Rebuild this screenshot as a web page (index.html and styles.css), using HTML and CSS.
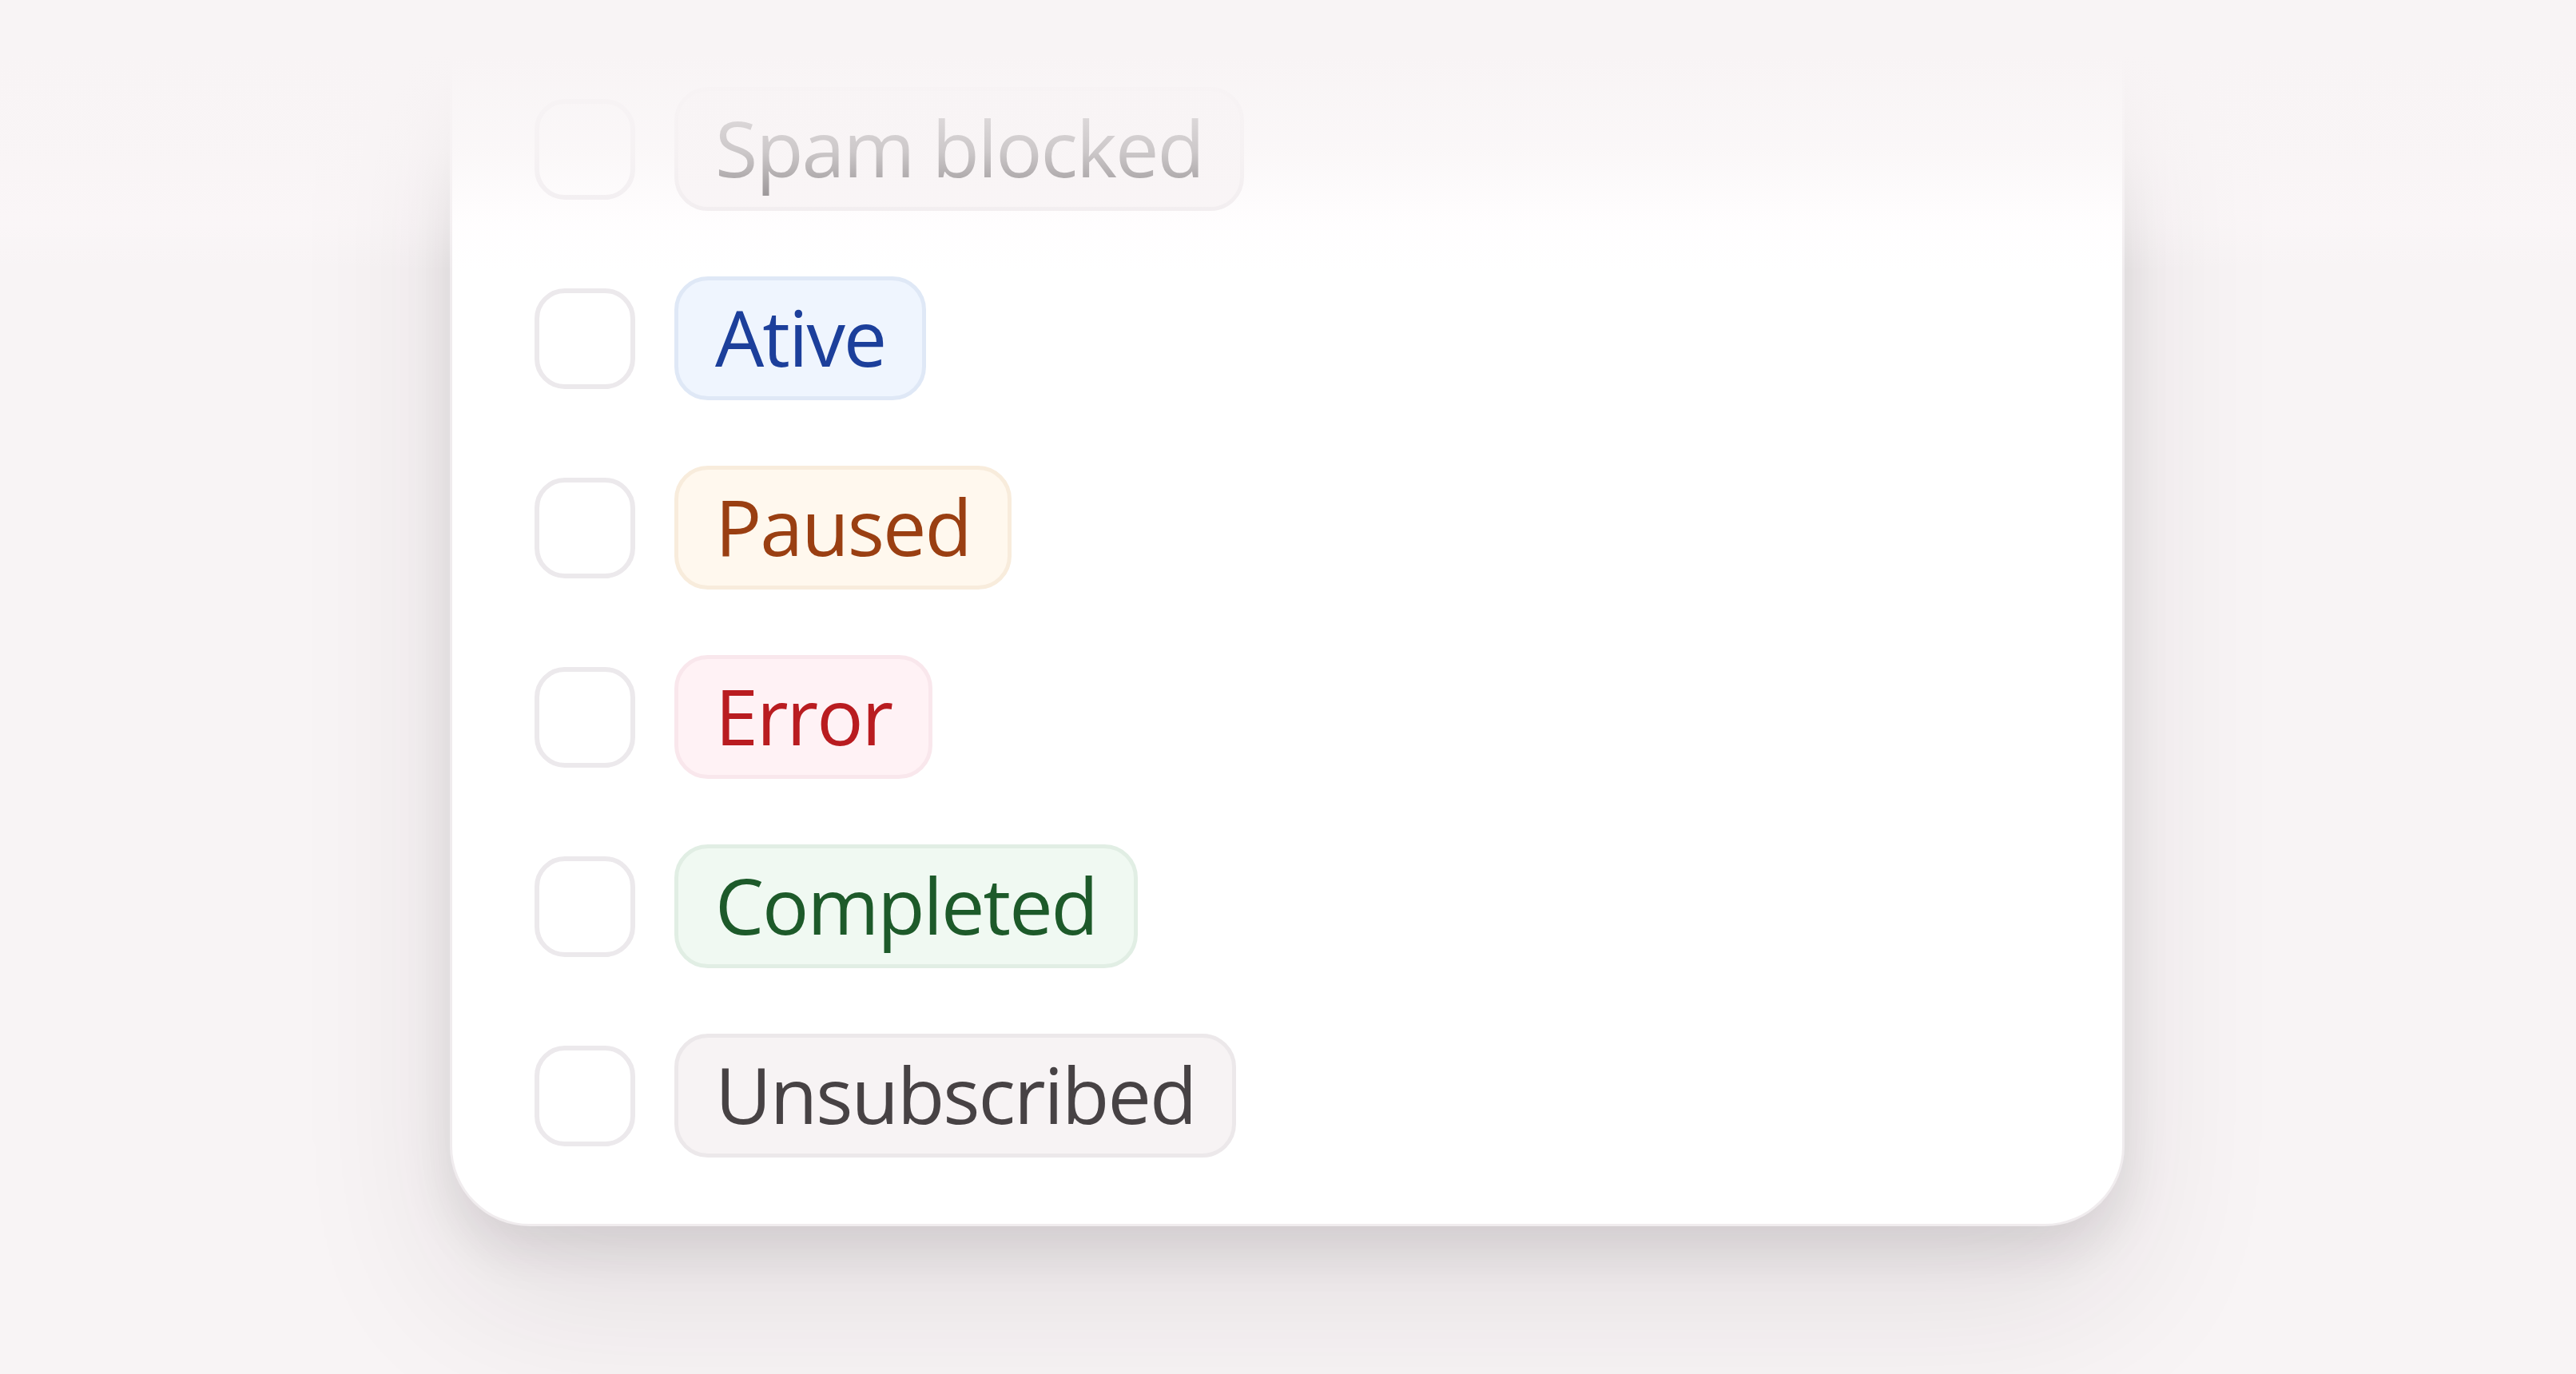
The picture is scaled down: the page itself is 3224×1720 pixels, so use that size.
FILE: index.html
```html
<html>

<head>
  <title>Status filter</title>
  <link rel="stylesheet" href="styles.css">
</head>

<body>

  <main>
    <div class="fade"></div>
    <ul class="card">
      <li class="row">
        <span class="check"></span>
        <span class="badge gray">Spam blocked</span>
      </li>
      <li class="row">
        <span class="check"></span>
        <span class="badge blue">Ative</span>
      </li>
      <li class="row">
        <span class="check"></span>
        <span class="badge orange">Paused</span>
      </li>
      <li class="row">
        <span class="check"></span>
        <span class="badge red">Error</span>
      </li>
      <li class="row">
        <span class="check"></span>
        <span class="badge green">Completed</span>
      </li>
      <li class="row">
        <span class="check"></span>
        <span class="badge gray">Unsubscribed</span>
      </li>
    </ul>
  </main>

</body>

</html>
```

FILE: styles.css
```css
body {
  margin: 0;
  background-color: #f8f4f5;
  font-family: "Open Sans", "Noto Sans", sans-serif;
  overflow: hidden;
}

main {
  height: 1720px;
  padding-left: 563px;
}

.fade {
  position: absolute;
  top: 0;
  left: 0;
  width: 100%;
  height: 340px;
  background: linear-gradient(to bottom,
      #f8f4f5 0,
      #f8f4f5 70px,
      rgba(249, 245, 246, 0.75) 190px,
      rgba(255, 250, 252, 0.3) 280px,
      rgba(255, 250, 252, 0) 340px);
  z-index: 1;
}

.card {
  box-sizing: border-box;
  width: 2096px;
  height: 1535px;
  margin: 0;
  padding: 109px 0 0 103px;
  list-style: none;
  background-color: #fff;
  border: 3px solid #f0ecee;
  border-top: none;
  border-radius: 0 0 100px 100px;
  box-shadow: 0 30px 60px rgba(40, 30, 35, 0.10), 0 90px 200px rgba(40, 30, 35, 0.10);
  display: flex;
  flex-direction: column;
  gap: 82px;
}

.row {
  display: flex;
  align-items: center;
  gap: 49px;
  height: 155px;
}

.check {
  box-sizing: border-box;
  width: 126px;
  height: 126px;
  border: 6px solid #ece9ec;
  border-radius: 38px;
  background-color: #fff;
}

.badge {
  box-sizing: border-box;
  height: 155px;
  display: flex;
  align-items: center;
  padding: 0 46px 4px;
  border: 5px solid;
  border-radius: 42px;
  font-size: 97px;
  font-weight: 500;
  line-height: 1;
  letter-spacing: -2px;
}

.blue {
  color: #1c3f9b;
  background-color: #eff5fe;
  border-color: #dfe8f6;
}

.orange {
  color: #9a3f12;
  background-color: #fff8ee;
  border-color: #f8ecdc;
}

.red {
  color: #b91c20;
  background-color: #fff2f5;
  border-color: #f9e7ec;
}

.green {
  color: #1d5a2a;
  background-color: #f0f9f2;
  border-color: #e1eee4;
}

.gray {
  color: #474244;
  background-color: #f7f3f4;
  border-color: #ece8ea;
}
```
